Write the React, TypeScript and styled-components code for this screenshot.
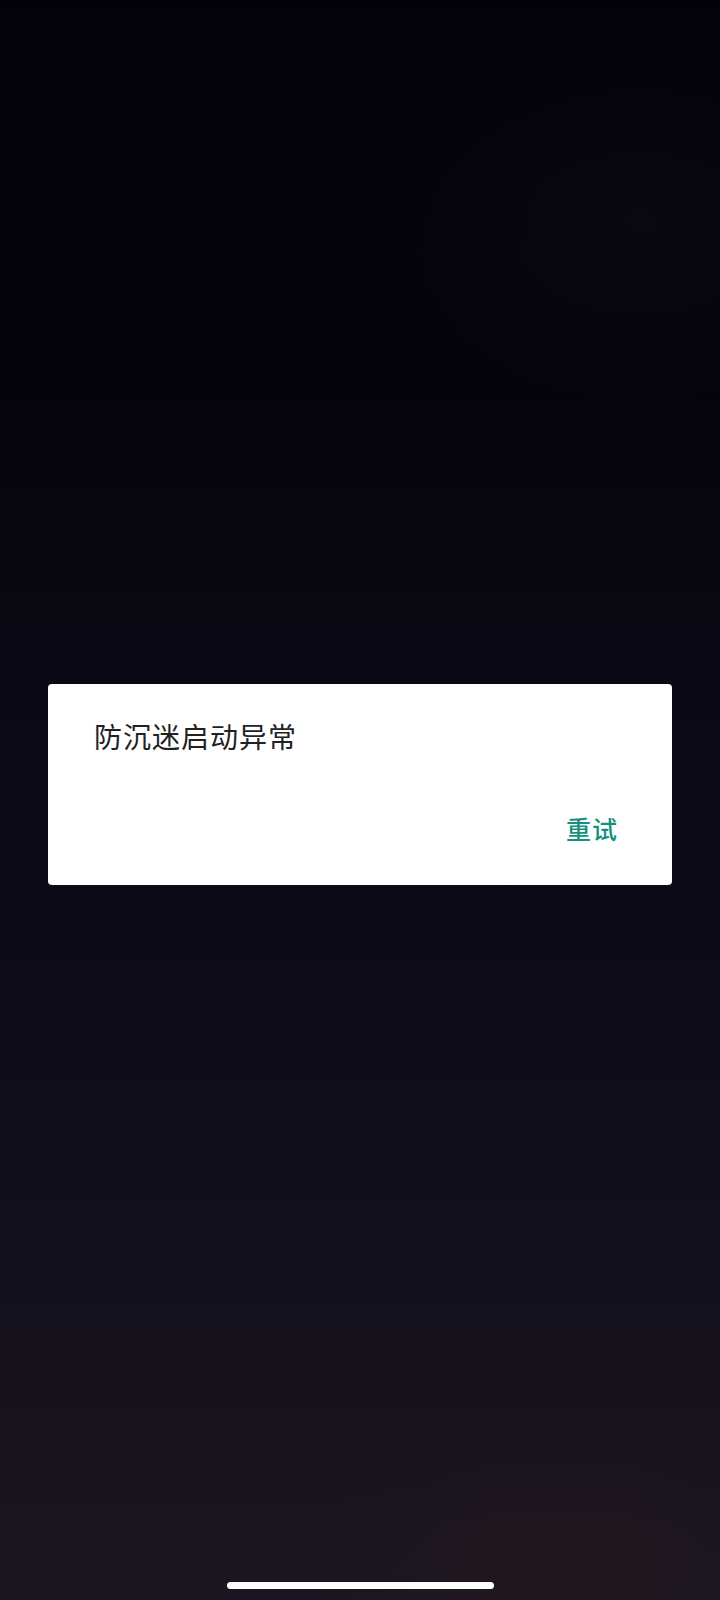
import React from "react";
import styled, { createGlobalStyle } from "styled-components";

const GlobalStyle = createGlobalStyle`
  html, body {
    margin: 0;
    padding: 0;
    background: #03030c;
  }
  * {
    box-sizing: border-box;
  }
`;

export default function App() {
  return (
    <>
      <GlobalStyle />
      <Screen>
        <Dialog>
          <Title>防沉迷启动异常</Title>
          <Actions>
            <ActionButton>重试</ActionButton>
          </Actions>
        </Dialog>
        <Spacer />
        <HomeBar />
      </Screen>
    </>
  );
}

const Screen = styled.div`
  width: 720px;
  height: 1600px;
  display: flex;
  flex-direction: column;
  align-items: center;
  overflow: hidden;
  font-family: "Noto Sans CJK SC", "Noto Sans", sans-serif;
  background:
    radial-gradient(ellipse 260px 180px at 640px 220px, rgba(30, 26, 40, 0.2), transparent),
    radial-gradient(ellipse 260px 160px at 560px 1560px, rgba(50, 24, 30, 0.3), transparent),
    linear-gradient(
      180deg,
      #03020b 0%,
      #05040e 25%,
      #0a0915 45%,
      #0e0b18 60%,
      #120e1b 75%,
      #17121e 88%,
      #1b1621 100%
    );
`;

const Dialog = styled.div`
  margin-top: 684px;
  width: 624px;
  height: 201px;
  background: #ffffff;
  border-radius: 4px;
  display: flex;
  flex-direction: column;
  padding: 32px 0 0 46px;
`;

const Title = styled.div`
  font-size: 28px;
  line-height: 40px;
  color: #222222;
  letter-spacing: 1px;
`;

const Actions = styled.div`
  display: flex;
  justify-content: flex-end;
  padding-right: 54px;
  margin-top: 54px;
`;

const ActionButton = styled.button`
  border: none;
  background: none;
  padding: 0;
  font-family: inherit;
  font-size: 25px;
  line-height: 36px;
  font-weight: 500;
  color: #17907f;
  letter-spacing: 1px;
`;

const Spacer = styled.div`
  flex: 1;
`;

const HomeBar = styled.div`
  width: 267px;
  height: 7px;
  border-radius: 4px;
  background: #ffffff;
  margin-bottom: 11px;
`;
